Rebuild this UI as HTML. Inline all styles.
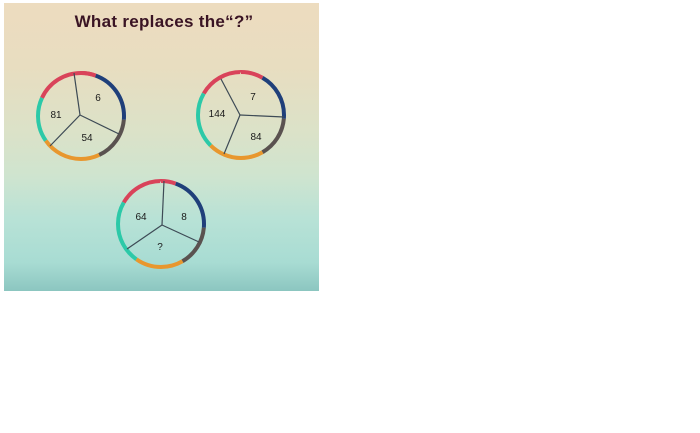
<!DOCTYPE html>
<html><head><meta charset="utf-8"><style>
html,body{margin:0;padding:0;background:#fff;width:700px;height:433px;overflow:hidden}
.pic{position:absolute;left:4px;top:3px;width:315px;height:288px;
background:linear-gradient(180deg,#eddcbf 0%,#e8ddc0 22%,#dbe2c8 45%,#cfe4cf 60%,#b8e2d6 75%,#a8dcd3 90%,#8cc6c0 100%)}
svg{position:absolute;left:0;top:0}
text{font-family:"Liberation Sans",sans-serif;fill:#1a1a1a}
</style></head><body>
<div class="pic"></div>
<svg width="330" height="300" viewBox="0 0 330 300">
<text x="164" y="27" text-anchor="middle" font-size="17" font-weight="bold" style="fill:#3a1424;letter-spacing:0.3px">What replaces the“?”</text>
<!-- circle 1 -->
<g transform="translate(81,116)" fill="none" stroke-width="4">
 <g transform="rotate(-90)">
  <circle r="43" pathLength="360" stroke="#d9435a" stroke-dasharray="85 275" stroke-dashoffset="-295"/>
  <circle r="43" pathLength="360" stroke="#d9435a" stroke-dasharray="20 340"/>
  <circle r="43" pathLength="360" stroke="#1f3f7a" stroke-dasharray="75 285" stroke-dashoffset="-20"/>
  <circle r="43" pathLength="360" stroke="#5a5250" stroke-dasharray="60 300" stroke-dashoffset="-95"/>
  <circle r="43" pathLength="360" stroke="#e8972e" stroke-dasharray="80 280" stroke-dashoffset="-155"/>
  <circle r="43" pathLength="360" stroke="#2cc9a8" stroke-dasharray="60 300" stroke-dashoffset="-235"/>
 </g>
 <g stroke="#3d4a55" stroke-width="1.2">
  <line x1="-1" y1="-1" x2="-7" y2="-43"/>
  <line x1="-1" y1="-1" x2="38" y2="18"/>
  <line x1="-1" y1="-1" x2="-31" y2="30"/>
 </g>
</g>
<text x="98" y="101" font-size="10" text-anchor="middle">6</text>
<text x="56" y="118" font-size="10" text-anchor="middle">81</text>
<text x="87" y="141" font-size="10" text-anchor="middle">54</text>
<!-- circle 2 -->
<g transform="translate(241,115)" fill="none" stroke-width="4">
 <g transform="rotate(-90)">
  <circle r="43" pathLength="360" stroke="#d9435a" stroke-dasharray="60 300" stroke-dashoffset="-300"/>
  <circle r="43" pathLength="360" stroke="#d9435a" stroke-dasharray="30 330"/>
  <circle r="43" pathLength="360" stroke="#1f3f7a" stroke-dasharray="65 295" stroke-dashoffset="-30"/>
  <circle r="43" pathLength="360" stroke="#5a5250" stroke-dasharray="55 305" stroke-dashoffset="-95"/>
  <circle r="43" pathLength="360" stroke="#e8972e" stroke-dasharray="75 285" stroke-dashoffset="-150"/>
  <circle r="43" pathLength="360" stroke="#2cc9a8" stroke-dasharray="75 285" stroke-dashoffset="-225"/>
 </g>
 <g stroke="#3d4a55" stroke-width="1.2">
  <line x1="-1" y1="0" x2="-20" y2="-36"/>
  <line x1="-1" y1="0" x2="43" y2="2"/>
  <line x1="-1" y1="0" x2="-17" y2="39"/>
 </g>
</g>
<text x="253" y="100" font-size="10" text-anchor="middle">7</text>
<text x="217" y="117" font-size="10" text-anchor="middle">144</text>
<text x="256" y="140" font-size="10" text-anchor="middle">84</text>
<!-- circle 3 -->
<g transform="translate(161,224)" fill="none" stroke-width="4">
 <g transform="rotate(-90)">
  <circle r="43" pathLength="360" stroke="#d9435a" stroke-dasharray="60 300" stroke-dashoffset="-300"/>
  <circle r="43" pathLength="360" stroke="#d9435a" stroke-dasharray="20 340"/>
  <circle r="43" pathLength="360" stroke="#1f3f7a" stroke-dasharray="75 285" stroke-dashoffset="-20"/>
  <circle r="43" pathLength="360" stroke="#5a5250" stroke-dasharray="55 305" stroke-dashoffset="-95"/>
  <circle r="43" pathLength="360" stroke="#e8972e" stroke-dasharray="65 295" stroke-dashoffset="-150"/>
  <circle r="43" pathLength="360" stroke="#2cc9a8" stroke-dasharray="85 275" stroke-dashoffset="-215"/>
 </g>
 <g stroke="#3d4a55" stroke-width="1.2">
  <line x1="1" y1="1" x2="3" y2="-43"/>
  <line x1="1" y1="1" x2="38" y2="18"/>
  <line x1="1" y1="1" x2="-34" y2="25"/>
 </g>
</g>
<text x="141" y="220" font-size="10" text-anchor="middle">64</text>
<text x="184" y="220" font-size="10" text-anchor="middle">8</text>
<text x="160" y="250" font-size="10" text-anchor="middle">?</text>
</svg>
</body></html>
